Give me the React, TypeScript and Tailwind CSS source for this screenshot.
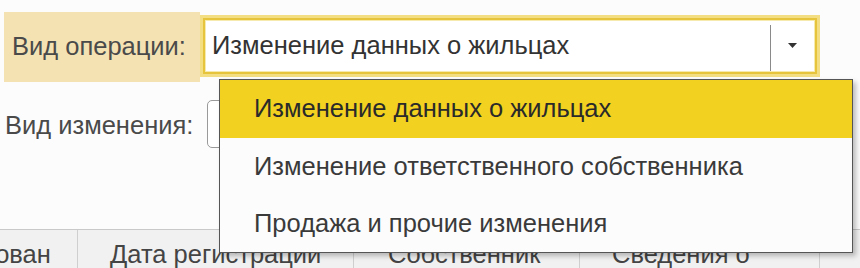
import React from "react";

export default function App() {
  const font = { fontFamily: '"Liberation Sans", Arial, sans-serif' };
  return (
    <div
      className="relative w-[860px] h-[268px] overflow-hidden bg-[#fcfcfc] text-[25.5px] leading-none text-[#3a3a3a]"
      style={font}
    >
      {/* Row 1 */}
      <div className="flex pt-[12px]">
        <div className="ml-[4px] w-[196px] h-[70px] bg-[#f4e2b3] flex items-center pl-[8px] text-[#4a4a4a]">
          Вид операции:
        </div>
        <div className="mt-[3px] w-[620px] h-[62px] bg-[#f3de84] p-[3px]">
          <div className="h-full border-2 border-[#e6c53c]">
            <div className="h-full border border-[#f7eaae] bg-white flex items-center">
              <div className="flex-1 pl-[6px] text-[#333]">Изменение данных о жильцах</div>
              <div className="h-[46px] w-px bg-[#8a8a8a] self-end" />
              <div className="w-[43px] flex items-center justify-center">
                <svg width="9" height="6" viewBox="0 0 9 6">
                  <path d="M0 0 H9 L4.5 5 Z" fill="#333" />
                </svg>
              </div>
            </div>
          </div>
        </div>
      </div>

      {/* Row 2 */}
      <div className="flex mt-[18px]">
        <div className="w-[207px] pl-[5px] pt-[13px] text-[#4a4a4a]">Вид изменения:</div>
        <div className="w-[40px] h-[48px] rounded-l-[5px] border border-[#9a9a9a] bg-white" />
      </div>

      {/* Table header */}
      <div className="absolute left-0 right-0 top-[229px] h-[39px] border-t border-[#c9c9c9] bg-[#f1f1f1] flex text-[#444]">
        <div className="w-[78px] border-r border-[#cfcfcf] pt-[12px] overflow-hidden whitespace-nowrap">
          <span className="ml-[-19px]">рован</span>
        </div>
        <div className="w-[276px] border-r border-[#cfcfcf] pt-[12px] pl-[32px] whitespace-nowrap">Дата регистрации</div>
        <div className="w-[226px] border-r border-[#cfcfcf] pt-[12px] pl-[34px] whitespace-nowrap">Собственник</div>
        <div className="w-[240px] border-r border-[#cfcfcf] pt-[12px] pl-[32px] whitespace-nowrap">Сведения о</div>
        <div className="flex-1" />
      </div>

      {/* Dropdown popup */}
      <div className="absolute left-[219px] top-[79px] w-[634px] h-[174px] border border-[#555] bg-[#fcfcfc] shadow-[3px_3px_5px_rgba(0,0,0,0.25)] flex flex-col">
        <div className="h-[58px] bg-[#f3d120] flex items-center pl-[34px] text-[#2a2a2a]">
          Изменение данных о жильцах
        </div>
        <div className="h-[57px] flex items-center pl-[34px]">Изменение ответственного собственника</div>
        <div className="h-[57px] flex items-center pl-[34px]">Продажа и прочие изменения</div>
      </div>
    </div>
  );
}
